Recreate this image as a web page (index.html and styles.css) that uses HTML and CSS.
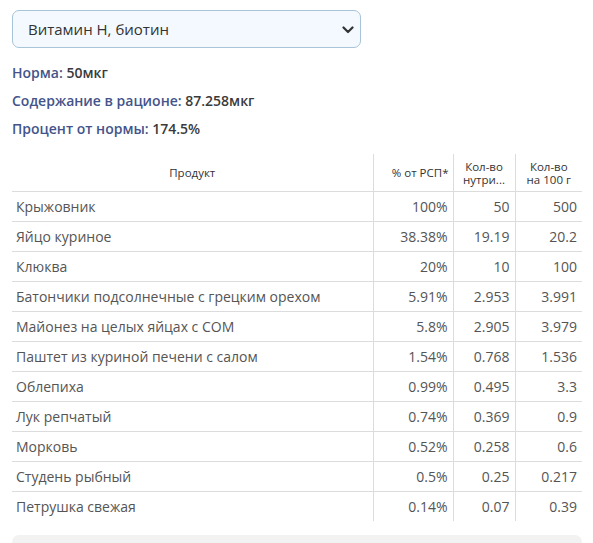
FILE: index.html
```html
<!DOCTYPE html>
<html lang="ru">
<head>
<meta charset="utf-8">
<link rel="stylesheet" href="styles.css">
</head>
<body>
<div class="page">
  <div class="select-wrap">
    <select class="nutrient-select">
      <option>Витамин H, биотин</option>
    </select>
    <svg class="chevron" width="12" height="8" viewBox="0 0 12 8"><path d="M1.5 1.5 L6 6 L10.5 1.5" fill="none" stroke="#333" stroke-width="2.2" stroke-linecap="round" stroke-linejoin="round"/></svg>
  </div>
  <div class="stats">
    <p class="stat"><span class="stat-label">Норма:</span> 50мкг</p>
    <p class="stat"><span class="stat-label">Содержание в рационе:</span> 87.258мкг</p>
    <p class="stat"><span class="stat-label">Процент от нормы:</span> 174.5%</p>
  </div>
  <table class="products">
    <colgroup>
      <col class="c-name"><col class="c-pct"><col class="c-amt"><col class="c-per">
    </colgroup>
    <thead>
      <tr>
        <th class="h-center">Продукт</th>
        <th class="h-right">% от РСП*</th>
        <th class="h-center"><span class="h-line">Кол-во</span><span class="h-line">нутри...</span></th>
        <th class="h-center"><span class="h-line">Кол-во</span><span class="h-line">на 100 г</span></th>
      </tr>
    </thead>
    <tbody>
      <tr><td>Крыжовник</td><td>100%</td><td>50</td><td>500</td></tr>
      <tr><td>Яйцо куриное</td><td>38.38%</td><td>19.19</td><td>20.2</td></tr>
      <tr><td>Клюква</td><td>20%</td><td>10</td><td>100</td></tr>
      <tr><td>Батончики подсолнечные с грецким орехом</td><td>5.91%</td><td>2.953</td><td>3.991</td></tr>
      <tr><td>Майонез на целых яйцах с СОМ</td><td>5.8%</td><td>2.905</td><td>3.979</td></tr>
      <tr><td>Паштет из куриной печени с салом</td><td>1.54%</td><td>0.768</td><td>1.536</td></tr>
      <tr><td>Облепиха</td><td>0.99%</td><td>0.495</td><td>3.3</td></tr>
      <tr><td>Лук репчатый</td><td>0.74%</td><td>0.369</td><td>0.9</td></tr>
      <tr><td>Морковь</td><td>0.52%</td><td>0.258</td><td>0.6</td></tr>
      <tr><td>Студень рыбный</td><td>0.5%</td><td>0.25</td><td>0.217</td></tr>
      <tr><td>Петрушка свежая</td><td>0.14%</td><td>0.07</td><td>0.39</td></tr>
    </tbody>
  </table>
  <div class="footer-box"></div>
</div>
</body>
</html>
```

FILE: styles.css
```css
html, body {
  margin: 0;
  padding: 0;
  background: #fff;
}
body {
  font-family: "Open Sans", "Liberation Sans", sans-serif;
  color: #333;
}
.page {
  width: 570px;
  padding: 10px 0 0 12px;
}
.select-wrap {
  position: relative;
  width: 349px;
  height: 38px;
}
.nutrient-select {
  appearance: none;
  -webkit-appearance: none;
  width: 100%;
  height: 38px;
  box-sizing: border-box;
  border: 1px solid #a8c4d8;
  border-radius: 7px;
  background: #f3f9ff;
  font-family: "Open Sans", "Liberation Sans", sans-serif;
  font-size: 15px;
  font-weight: 500;
  color: #333;
  padding: 0 30px 0 15px;
  outline: none;
}
.chevron {
  position: absolute;
  right: 7px;
  top: 16px;
}
.stats {
  padding-top: 15px;
}
.stat {
  margin: 0 0 9px 0;
  font-size: 14px;
  line-height: 19px;
  font-weight: 600;
  color: #3a3a3a;
}
.stat-label {
  color: #44548a;
}
.products {
  margin-top: 16px;
  width: 570px;
  border-collapse: collapse;
  table-layout: fixed;
  font-size: 14px;
  color: #555;
}
.c-name { width: 361px; }
.c-pct { width: 80px; }
.c-amt { width: 62px; }
.c-per { width: 67px; }
.products th {
  font-size: 11.5px;
  font-weight: 500;
  color: #333;
  line-height: 13px;
  height: 37px;
  padding: 0 4px;
  vertical-align: middle;
  border-bottom: 1px solid #dcdcdc;
}
.h-line {
  display: block;
  line-height: 13px;
}
.products th + th,
.products td + td {
  border-left: 1px solid #dcdcdc;
}
.h-center { text-align: center; }
.h-right { text-align: right; }
.products td {
  height: 29px;
  padding: 0 5px;
  text-align: right;
  white-space: nowrap;
  line-height: 19px;
}
.products td:first-child {
  text-align: left;
  padding-left: 4px;
}
.products tbody tr + tr td {
  border-top: 1px solid #dcdcdc;
}
.footer-box {
  margin-top: 14px;
  height: 40px;
  background: #f2f2f2;
  border-radius: 7px;
}
```
